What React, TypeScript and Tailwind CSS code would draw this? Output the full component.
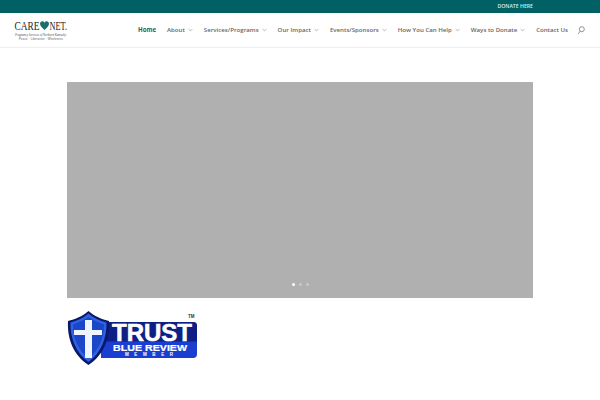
const items: [string, boolean][] = [
  ["About", true],
  ["Services/Programs", true],
  ["Our Impact", true],
  ["Events/Sponsors", true],
  ["How You Can Help", true],
  ["Ways to Donate", true],
  ["Contact Us", false],
];

function Chevron() {
  return (
    <svg width="5" height="4" viewBox="0 0 5 4" className="ml-[3px]">
      <path d="M0.6 1 L2.500 2.900 L4.400 1" fill="none" stroke="#888" strokeWidth="0.6" />
    </svg>
  );
}

function Logo() {
  return (
    <svg width="60" height="24" viewBox="0 0 60 24">
      <text x="0.500" y="12" fontFamily="'Liberation Serif',serif" fontSize="13" fill="#1c1c1c" textLength="25" lengthAdjust="spacingAndGlyphs">CARE</text>
      <path d="M30.500 12 C28.500 10 26 8.500 26 5.800 C26 3.800 27.500 3 28.800 3.300 C29.600 3.500 30.200 4 30.500 4.800 C30.800 4 31.400 3.500 32.200 3.300 C33.500 3 35 3.800 35 5.800 C35 8.500 32.500 10 30.500 12 Z" fill="#17706e" />
      <text x="35.500" y="12" fontFamily="'Liberation Serif',serif" fontSize="13" fill="#1c1c1c" textLength="17.500" lengthAdjust="spacingAndGlyphs">NET.</text>
      <text x="1" y="17.500" fontFamily="'Liberation Serif',serif" fontStyle="italic" fontSize="3.600" fill="#3f4f5f" textLength="51" lengthAdjust="spacingAndGlyphs">Pregnancy Services of Northern Kentucky</text>
      <text x="5" y="21.500" fontFamily="'Liberation Sans',sans-serif" fontSize="2.800" fill="#5a5a5a" textLength="44" lengthAdjust="spacing">Peace · Liberation · Wholeness</text>
    </svg>
  );
}

function Badge() {
  return (
    <svg width="131" height="56" viewBox="0 0 131 56">
      <path d="M34 12 H126 Q130 12 130 16 V44 Q130 48 126 48 H34 Z" fill="#1a3fd0" />
      <path d="M34 12 H126 Q130 12 130 16 V31.500 H34 Z" fill="#0e1f86" />
      <path d="M21.500 1 C16 6 8 9.500 1 11 C0 28 6 45 21.500 55 C37 45 43 28 42 11 C35 9.500 27 6 21.500 1 Z" fill="#0a1866" />
      <path d="M21.500 3.500 C17 7.500 10 11 3.500 12.500 C3 27 8.500 43 21.500 52 C34.500 43 40 27 39.500 12.500 C33 11 26 7.500 21.500 3.500 Z" fill="#2d62e6" />
      <path d="M21.500 7 C17 10 11 13 6 14.500 C6 27 10.500 40 21.500 48.500 C32.500 40 37 27 37 14.500 C32 13 26 10 21.500 7 Z" fill="#1c46c8" />
      <path d="M18 10 H25 V20 H35 V25 H25 V48 H18 V25 H7 V20 H18 Z" fill="#f0f4ff" />
      <text x="45" y="31" fontFamily="'Liberation Sans',sans-serif" fontWeight="700" fontSize="24" fill="#ffffff" stroke="#ffffff" strokeWidth="0.6" textLength="80" lengthAdjust="spacingAndGlyphs">TRUST</text>
      <text x="46" y="40.500" fontFamily="'Liberation Sans',sans-serif" fontWeight="700" fontSize="8.500" fill="#ffffff" stroke="#ffffff" strokeWidth="0.2" textLength="74" lengthAdjust="spacingAndGlyphs">BLUE REVIEW</text>
      <text x="58" y="46.300" fontFamily="'Liberation Sans',sans-serif" fontWeight="700" fontSize="4.500" fill="#ffffff" textLength="48" lengthAdjust="spacing">MEMBER</text>
      <text x="121" y="7.500" fontFamily="'Liberation Sans',sans-serif" fontWeight="700" fontSize="4.500" fill="#333">TM</text>
    </svg>
  );
}

export default function App() {
  return (
    <div className="w-[600px] h-[400px] bg-white overflow-hidden font-['Open_Sans',sans-serif]">
      <div className="h-[13px] bg-[#006064] flex items-center justify-end pr-[67px]">
        <a className="text-[5.2px] leading-[13px] font-semibold text-[#d5f0ee]">DONATE HERE</a>
      </div>
      <header className="h-[35px] border-b border-[#eeeeee] flex items-center pl-[14px] pr-[15px]">
        <Logo />
        <nav className="flex items-center gap-[11px] ml-[64px] text-[6.1px] font-semibold text-[#666] whitespace-nowrap">
          <a className="text-[#0f6a68] font-bold">Home</a>
          {items.map(([label, caret]) => (
            <a key={label} className="flex items-center">
              {label}
              {caret && <Chevron />}
            </a>
          ))}
        </nav>
        <svg width="8" height="9" viewBox="0 0 8 9" className="ml-auto">
          <circle cx="4.800" cy="3.200" r="2.500" fill="none" stroke="#666" strokeWidth="0.7" />
          <path d="M3.200 5.200 L1 8" stroke="#666" strokeWidth="0.7" />
        </svg>
      </header>
      <main className="px-[67px] pt-[34px]">
        <div className="h-[216px] bg-[#b0b0b0] flex items-end justify-center gap-[4px] pb-[12px]">
          <span className="w-[3px] h-[3px] rounded-full bg-white" />
          <span className="w-[3px] h-[3px] rounded-full bg-[#c8c8c8]" />
          <span className="w-[3px] h-[3px] rounded-full bg-[#c8c8c8]" />
        </div>
        <div className="mt-[12px]">
          <Badge />
        </div>
      </main>
    </div>
  );
}
